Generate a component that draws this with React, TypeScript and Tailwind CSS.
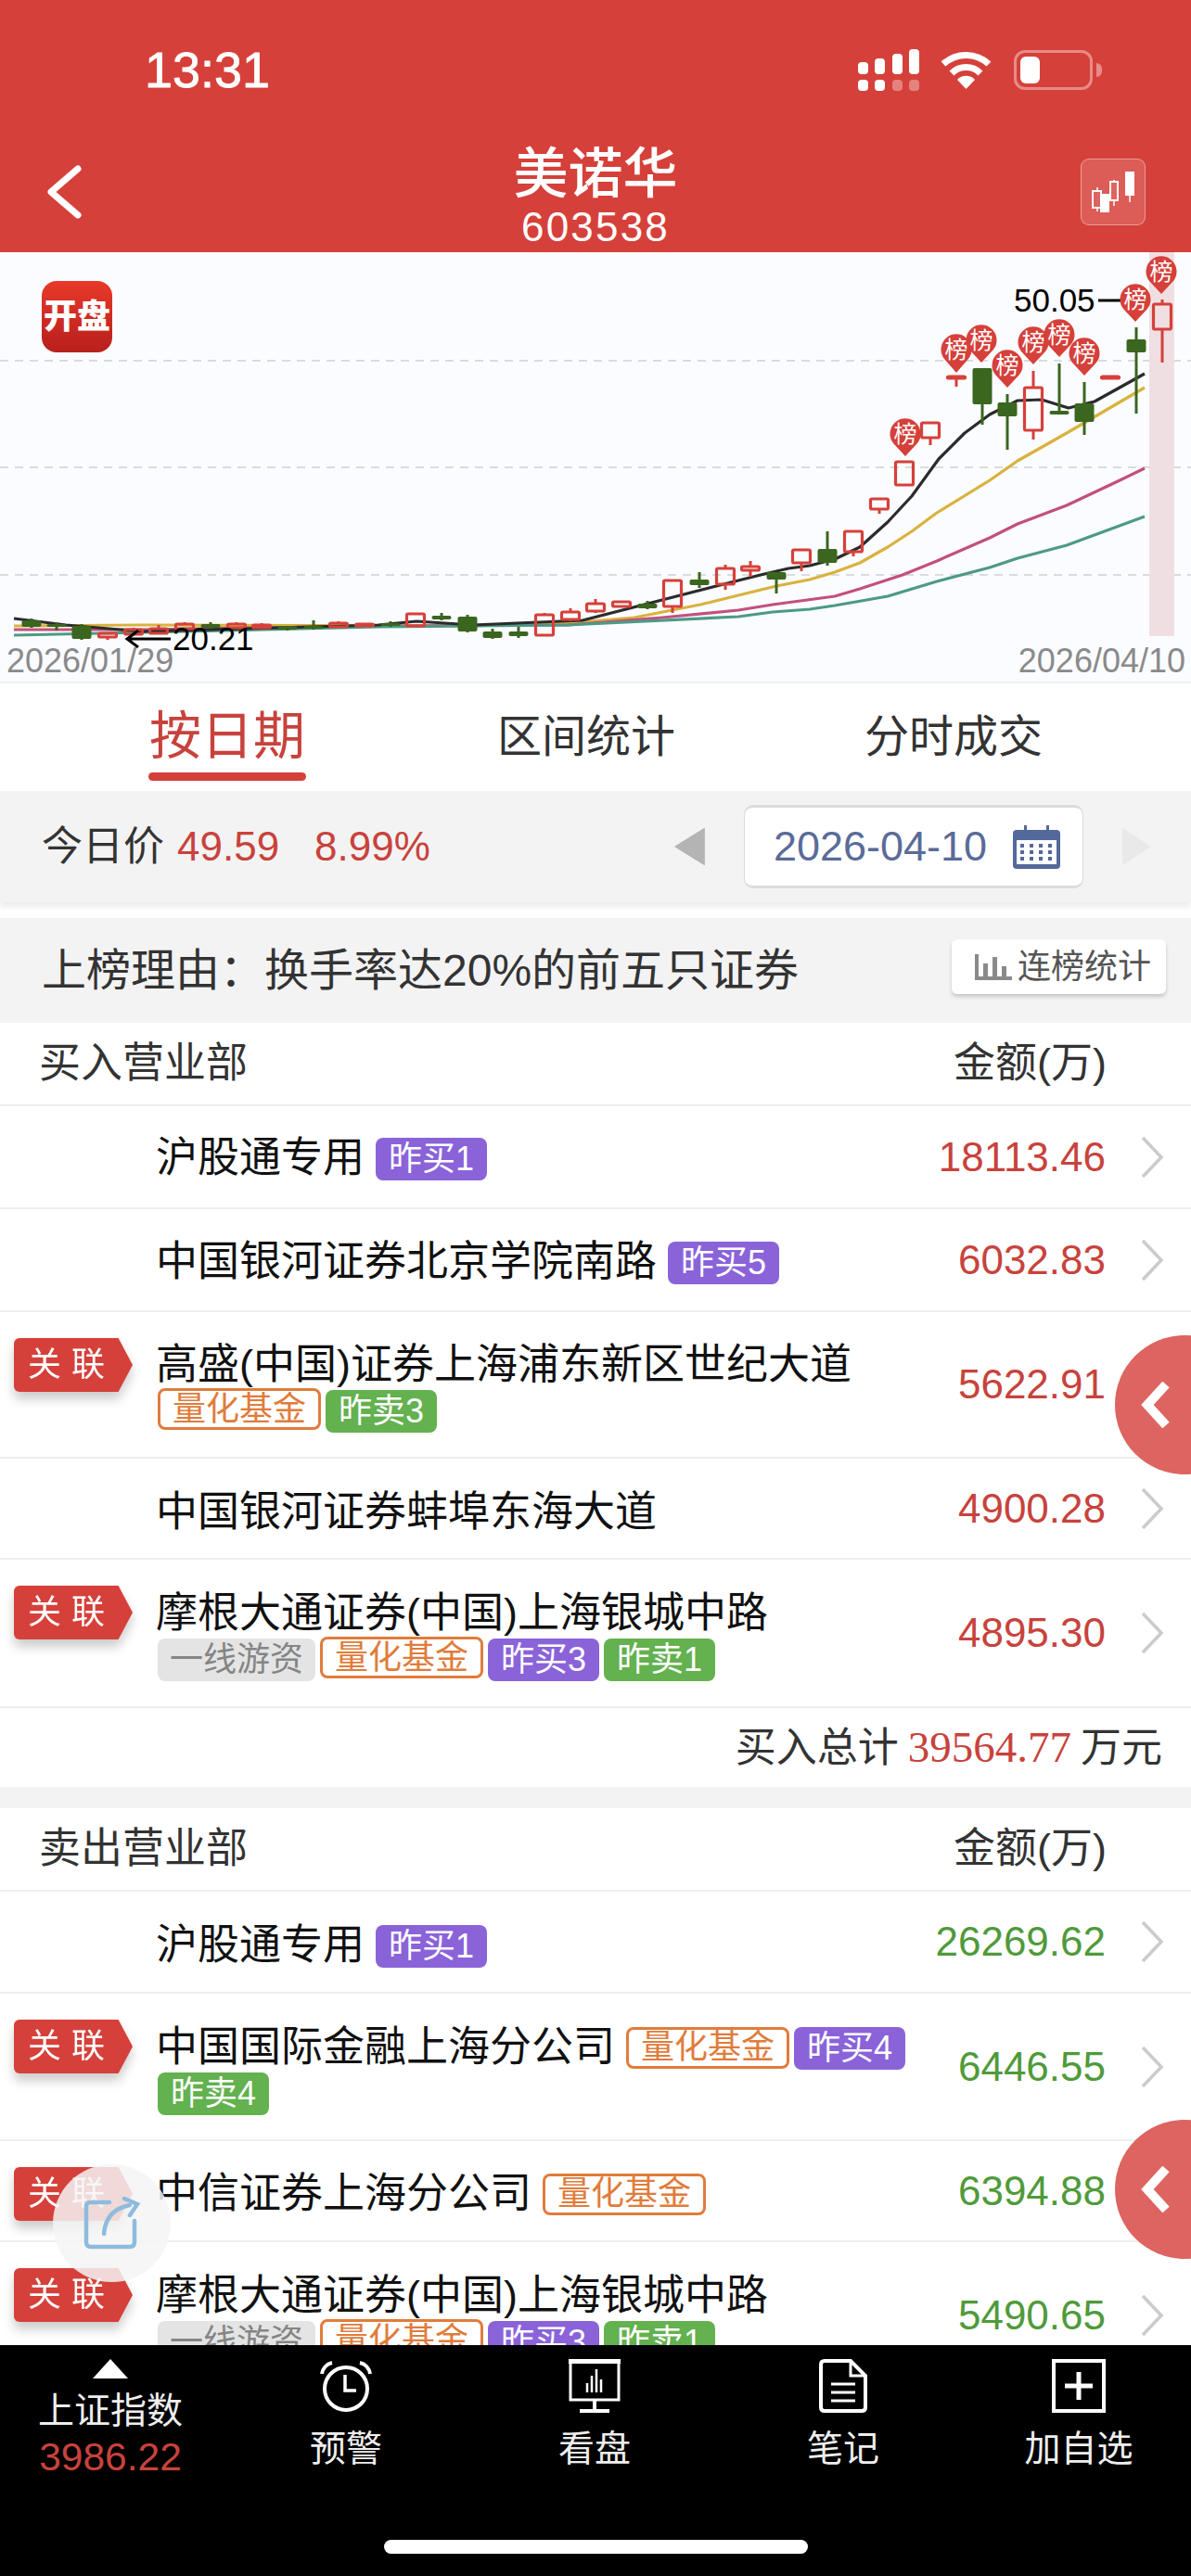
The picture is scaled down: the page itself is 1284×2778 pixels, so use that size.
const RED = '#c8423c';

type TagKind = 'buy' | 'sell' | 'quant' | 'hot';
type Tag = { kind: TagKind; text: string };
type Row = {
  name: string;
  amount: string;
  h: string;
  pt: string;
  linked?: boolean;
  tags?: Tag[];
  below?: Tag[];
};

const TAG_CLASS: Record<TagKind, string> = {
  buy: 'bg-[#8a63d9] text-white px-[14px] mt-[2px] h-[46px]',
  sell: 'bg-[#63b14f] text-white px-[14px] mt-[2px] h-[46px]',
  quant: 'border-[3px] border-[#e07c3c] text-[#e07c3c] bg-white px-[13px] h-[45px]',
  hot: 'bg-[#e4e4e4] text-[#858585] px-[13px] mt-[2px] h-[46px]',
};

const buyRows: Row[] = [
  { name: '沪股通专用', amount: '18113.46', h: 'h-[111px]', pt: 'pt-[31px]', tags: [{ kind: 'buy', text: '昨买1' }] },
  { name: '中国银河证券北京学院南路', amount: '6032.83', h: 'h-[111px]', pt: 'pt-[32px]', tags: [{ kind: 'buy', text: '昨买5' }] },
  {
    name: '高盛(中国)证券上海浦东新区世纪大道', amount: '5622.91', h: 'h-[158px]', pt: 'pt-[32px]', linked: true,
    below: [{ kind: 'quant', text: '量化基金' }, { kind: 'sell', text: '昨卖3' }],
  },
  { name: '中国银河证券蚌埠东海大道', amount: '4900.28', h: 'h-[109px]', pt: 'pt-[33px]' },
  {
    name: '摩根大通证券(中国)上海银城中路', amount: '4895.30', h: 'h-[160px]', pt: 'pt-[33px]', linked: true,
    below: [{ kind: 'hot', text: '一线游资' }, { kind: 'quant', text: '量化基金' }, { kind: 'buy', text: '昨买3' }, { kind: 'sell', text: '昨卖1' }],
  },
];

const sellRows: Row[] = [
  { name: '沪股通专用', amount: '26269.62', h: 'h-[110px]', pt: 'pt-[33px]', tags: [{ kind: 'buy', text: '昨买1' }] },
  {
    name: '中国国际金融上海分公司', amount: '6446.55', h: 'h-[159px]', pt: 'pt-[33px]', linked: true,
    tags: [{ kind: 'quant', text: '量化基金' }, { kind: 'buy', text: '昨买4' }],
    below: [{ kind: 'sell', text: '昨卖4' }],
  },
  { name: '中信证券上海分公司', amount: '6394.88', h: 'h-[109px]', pt: 'pt-[32px]', linked: true, tags: [{ kind: 'quant', text: '量化基金' }] },
  {
    name: '摩根大通证券(中国)上海银城中路', amount: '5490.65', h: 'h-[160px]', pt: 'pt-[33px]', linked: true,
    below: [{ kind: 'hot', text: '一线游资' }, { kind: 'quant', text: '量化基金' }, { kind: 'buy', text: '昨买3' }, { kind: 'sell', text: '昨卖1' }],
  },
];

// x, wick top, body top, body bottom, wick bottom, colour
const candles: [number, number, number, number, number, 'r' | 'g'][] = [
  [34, 667, 669, 676, 677, 'g'], [61, 671, 673, 676, 680, 'g'], [88, 673, 675, 689, 690, 'g'],
  [116, 683, 683, 687, 690, 'r'], [144, 677, 679, 684, 685, 'r'], [171, 674, 678, 683, 684, 'r'],
  [199, 671, 673, 678, 678, 'r'], [227, 671, 673, 677, 678, 'g'], [255, 671, 673, 677, 678, 'r'],
  [282, 672, 674, 677, 678, 'r'], [310, 675, 675, 679, 680, 'g'], [338, 669, 675, 678, 679, 'g'],
  [365, 670, 672, 676, 676, 'r'], [393, 672, 673, 675, 676, 'r'], [421, 670, 672, 675, 676, 'g'],
  [448, 661, 662, 675, 676, 'r'], [476, 661, 664, 668, 669, 'g'], [504, 663, 665, 681, 682, 'g'],
  [531, 678, 681, 688, 689, 'g'], [559, 676, 681, 686, 688, 'g'], [587, 661, 663, 685, 686, 'r'],
  [615, 656, 660, 668, 670, 'r'], [642, 646, 651, 659, 661, 'r'], [670, 648, 649, 654, 655, 'r'],
  [698, 648, 651, 656, 657, 'g'], [725, 625, 626, 654, 661, 'r'], [754, 617, 625, 631, 634, 'g'],
  [782, 609, 613, 630, 636, 'r'], [809, 605, 611, 615, 622, 'r'], [837, 617, 617, 625, 640, 'g'],
  [864, 593, 593, 607, 616, 'r'], [892, 573, 592, 607, 610, 'g'], [920, 573, 573, 595, 600, 'r'],
  [948, 538, 538, 549, 554, 'r'], [975, 498, 498, 523, 523, 'r'], [1003, 456, 456, 472, 480, 'r'],
  [1031, 407, 406, 408, 417, 'r'], [1059, 397, 397, 436, 458, 'g'], [1086, 425, 434, 449, 485, 'g'],
  [1114, 400, 418, 464, 474, 'r'], [1142, 392, 443, 447, 447, 'g'], [1169, 412, 435, 455, 469, 'g'],
  [1197, 407, 406, 408, 408, 'r'], [1225, 353, 366, 380, 446, 'g'], [1253, 323, 328, 355, 391, 'r'],
];

const maLines: [string, string][] = [
  ['#d9b23e', '15,675 153,674 510,675 612,672 684,666 755,652 796,642 837,632 873,625 900,617 927,607 957,590 983,573 1010,553 1067,518 1097,497 1150,467 1234,418'],
  ['#c2507f', '15,679 153,679 408,675 612,674 714,666 796,658 833,652 900,643 927,635 973,620 1010,605 1067,580 1097,565 1150,545 1203,520 1234,505'],
  ['#4c9a85', '15,685 153,682 408,676 612,674 796,665 833,660 873,657 900,653 957,643 1010,627 1067,612 1097,602 1150,588 1234,557'],
  ['#2b2b2b', '15,667 71,674 153,681 408,674 449,670 510,674 628,669 796,626 820,620 850,613 873,610 900,603 927,590 957,563 983,535 1012,495 1040,467 1067,447 1097,432 1123,431 1152,440 1180,433 1234,403'],
];

const pins: [number, number, number][] = [
  [976, 468, 492], [1031, 377, 402], [1058, 367, 391], [1086, 394, 418], [1114, 369, 393],
  [1142, 361, 385], [1169, 381, 405], [1224, 323, 347], [1252, 293, 317],
];

function Chart() {
  return (
    <svg viewBox="0 272 1284 463" className="block w-[1284px] h-[463px]">
      <rect x="0" y="272" width="1284" height="463" fill="#fbfcff" />
      {[389, 504, 620].map((y) => (
        <line key={y} x1="0" x2="1284" y1={y} y2={y} stroke="#cfcfcf" strokeWidth="1.5" strokeDasharray="9 7" />
      ))}
      <rect x="1239" y="272" width="27" height="414" fill="#f0dfe2" />
      {maLines.map(([color, points]) => (
        <polyline key={color} points={points} fill="none" stroke={color} strokeWidth="3.2" strokeLinejoin="round" />
      ))}
      {candles.map(([x, wt, bt, bb, wb, c]) => {
        const color = c === 'r' ? '#d6403a' : '#3a661f';
        return (
          <g key={x}>
            <line x1={x} x2={x} y1={wt} y2={bt} stroke={color} strokeWidth="3" />
            <line x1={x} x2={x} y1={bb} y2={wb} stroke={color} strokeWidth="3" />
            {c === 'r' ? (
              <rect x={x - 9.5} y={bt} width="19" height={bb - bt} rx="1.5" fill="none" stroke={color} strokeWidth="3.2" />
            ) : (
              <rect x={x - 10.5} y={bt} width="21" height={bb - bt} rx="2" fill={color} />
            )}
          </g>
        );
      })}
      <line x1="1184" x2="1210" y1="324" y2="324" stroke="#000" strokeWidth="3" />
      {pins.map(([x, y, tip]) => (
        <g key={x}>
          <path d={`M${x} ${tip} L${x - 13} ${y + 10} A16.5 16.5 0 1 1 ${x + 13} ${y + 10} Z`} fill="#d6403a" />
          <text x={x} y={y + 9} textAnchor="middle" fontSize="25" fill="#fff">榜</text>
        </g>
      ))}
      <text x="1093" y="336" fontSize="35" fill="#000">50.05</text>
      <path d="M184 689 H138 M149 680 L137 689 L149 698" fill="none" stroke="#000" strokeWidth="3" />
      <text x="186" y="701" fontSize="35" fill="#000">20.21</text>
      <text x="7" y="725" fontSize="36" fill="#8a8a8a">2026/01/29</text>
      <text x="1278" y="725" fontSize="36" fill="#8a8a8a" textAnchor="end">2026/04/10</text>
    </svg>
  );
}

function StatusIcons() {
  return (
    <div className="flex items-start">
      <svg width="66" height="45" viewBox="0 0 66 45" className="mt-[53px]">
        {[[0, 14], [18, 10], [37, 5], [55, 0]].map(([x, y]) => (
          <rect key={x} x={x} y={y} width="11" height={27 - y} rx="4" fill="#fff" />
        ))}
        <rect x="0" y="33" width="11" height="12" rx="4" fill="#fff" />
        <rect x="18" y="33" width="11" height="12" rx="4" fill="#fff" />
        <rect x="37" y="33" width="11" height="12" rx="4" fill="#fff" fillOpacity="0.35" />
        <rect x="55" y="33" width="11" height="12" rx="4" fill="#fff" fillOpacity="0.35" />
      </svg>
      <svg width="57" height="41" viewBox="0 0 57 41" className="mt-[55px] ml-[22px]">
        <path d="M4 14 A36 36 0 0 1 53 14" fill="none" stroke="#fff" strokeWidth="7" />
        <path d="M13 24 A22 22 0 0 1 44 24" fill="none" stroke="#fff" strokeWidth="7" />
        <path d="M28.5 41 L19 31 A13 13 0 0 1 38 31 Z" fill="#fff" />
      </svg>
      <div className="mt-[54px] ml-[23px] w-[85px] h-[43px] rounded-[12px] border-[3px] border-white/40 p-[4px]">
        <div className="w-[21px] h-full rounded-[6px] bg-white" />
      </div>
      <div className="mt-[68px] ml-[4px] w-[6px] h-[15px] rounded-r-full bg-white/40" />
    </div>
  );
}

function Chevron() {
  return (
    <svg width="25" height="46" viewBox="0 0 25 46" className="shrink-0">
      <polyline points="2,2 22,23 2,44" fill="none" stroke="#cbcbcb" strokeWidth="3.5" />
    </svg>
  );
}

function TagChip({ tag }: { tag: Tag }) {
  return (
    <span className={`flex items-center rounded-[8px] text-[36px] leading-none whitespace-nowrap ${TAG_CLASS[tag.kind]}`}>
      {tag.text}
    </span>
  );
}

function ListRow({ row, color }: { row: Row; color: string }) {
  return (
    <div className={`flex shrink-0 border-b-2 border-[#eeeeee] ${row.h}`}>
      <div className="w-[168px] shrink-0 pl-[15px] pt-[28px]">
        {row.linked && (
          <div className="[filter:drop-shadow(0_8px_6px_rgba(0,0,0,0.2))]">
            <div className="flex items-center pl-[15px] w-[128px] h-[58px] rounded-l-[6px] bg-[#d6403a] text-white text-[36px] leading-none tracking-[11px] [clip-path:polygon(0_0,88%_0,100%_50%,88%_100%,0_100%)]">
              关联
            </div>
          </div>
        )}
      </div>
      <div className={`flex-1 min-w-0 ${row.pt}`}>
        <div className="flex items-center gap-[5px] h-[50px]">
          <span className="text-[45px] leading-[50px] text-[#111] whitespace-nowrap mr-[7px]">{row.name}</span>
          {row.tags?.map((t) => <TagChip key={t.text} tag={t} />)}
        </div>
        {row.below && (
          <div className="flex items-start gap-[5px] ml-[2px]">
            {row.below.map((t) => <TagChip key={t.text} tag={t} />)}
          </div>
        )}
      </div>
      <div className="flex items-center pr-[29px] shrink-0">
        <span className="text-[44px] leading-none" style={{ color }}>{row.amount}</span>
        <span className="w-[38px]" />
        <Chevron />
      </div>
    </div>
  );
}

function SectionHead({ title }: { title: string }) {
  return (
    <div className="flex items-center justify-between shrink-0 h-[90px] pl-[42px] pr-[91px] border-b-2 border-[#eeeeee] text-[45px] text-[#333]">
      <span>{title}</span>
      <span>金额(万)</span>
    </div>
  );
}

function SideHandle({ cls }: { cls: string }) {
  return (
    <div className={`absolute left-[1202px] w-[150px] h-[150px] rounded-full bg-[#dd6460] flex items-center pl-[27px] ${cls}`}>
      <svg width="34" height="50" viewBox="0 0 34 50">
        <polyline points="28,3 8,25 28,47" fill="none" stroke="#fff" strokeWidth="10" />
      </svg>
    </div>
  );
}

function TabIcon({ name }: { name: string }) {
  if (name === '预警') {
    return (
      <svg width="60" height="58" viewBox="0 0 60 58" fill="none" stroke="#fff">
        <circle cx="30" cy="32" r="23" strokeWidth="4" />
        <polyline points="29,17 29,34 41,34" strokeWidth="3.5" />
        <path d="M4 16 A14 14 0 0 1 15 4 M56 16 A14 14 0 0 0 45 4" strokeWidth="4" />
      </svg>
    );
  }
  if (name === '看盘') {
    return (
      <svg width="56" height="58" viewBox="0 0 56 58" fill="none" stroke="#fff">
        <rect x="2" y="3" width="52" height="41" strokeWidth="3" />
        <rect x="0" y="0" width="56" height="5" fill="#fff" stroke="none" />
        <path d="M20 36 V26 M25 36 V18 M30 36 V11 M35 36 V22" strokeWidth="2.5" />
        <path d="M28 44 V54 M12 56 H44" strokeWidth="4" />
      </svg>
    );
  }
  if (name === '笔记') {
    return (
      <svg width="52" height="58" viewBox="0 0 52 58" fill="none" stroke="#fff" strokeWidth="4">
        <path d="M6 2 H34 L50 18 V52 Q50 56 46 56 H6 Q2 56 2 52 V6 Q2 2 6 2 Z" />
        <path d="M34 2 V18 H50" strokeWidth="3" />
        <path d="M13 27 H39 M13 36 H39 M13 45 H39" strokeWidth="3" />
      </svg>
    );
  }
  return (
    <svg width="58" height="58" viewBox="0 0 58 58" fill="none" stroke="#fff" strokeWidth="4">
      <rect x="2" y="2" width="54" height="54" />
      <path d="M29 14 V44 M14 29 H44" strokeWidth="5" />
    </svg>
  );
}

function TabItem({ name, width }: { name: string; width: string }) {
  return (
    <div className={`flex flex-col items-center shrink-0 ${width}`}>
      <div className="h-[58px] flex items-end">
        <TabIcon name={name} />
      </div>
      <span className="mt-[14px] text-[39px] leading-[50px] text-[#eeeeee]">{name}</span>
    </div>
  );
}

export default function App() {
  return (
    <div className="relative flex flex-col w-[1284px] h-[2778px] overflow-hidden bg-white font-['Liberation_Sans','Noto_Sans_CJK_SC',sans-serif]">
      <header className="relative shrink-0 h-[272px] bg-[#d6403a] text-white">
        <div className="flex justify-between pl-[156px] pr-[96px] h-[150px]">
          <span className="mt-[45px] text-[54px] leading-[60px] [-webkit-text-stroke:0.8px_white]">13:31</span>
          <StatusIcons />
        </div>
        <div className="flex items-start justify-between pl-[47px] pr-[47px]">
          <div className="w-[72px]">
            <svg width="42" height="58" viewBox="0 0 42 58" className="mt-[28px]">
              <polyline points="37,4 8,29 37,54" fill="none" stroke="#fff" strokeWidth="7" strokeLinecap="round" strokeLinejoin="round" />
            </svg>
          </div>
          <div className="flex flex-col items-center">
            <span className="text-[59px] leading-[66px] font-medium mt-[5px]">美诺华</span>
            <span className="text-[44px] leading-[46px] tracking-[2.2px] mt-[1px]">603538</span>
          </div>
          <div className="flex items-center justify-center w-[70px] h-[72px] mt-[21px] mr-[2px] rounded-[9px] border border-white/40 bg-white/15">
            <svg width="50" height="50" viewBox="0 0 50 50" fill="none" stroke="#fff" strokeWidth="2">
              <path d="M8 20 V46 M26 12 V40 M43 4 V36" strokeWidth="1.5" />
              <rect x="3" y="24" width="9" height="18" fill="#dd6460" />
              <rect x="12" y="28" width="8" height="18" fill="#fff" />
              <rect x="22" y="14" width="8" height="20" fill="#dd6460" />
              <rect x="39" y="4" width="8" height="24" fill="#fff" />
            </svg>
          </div>
        </div>
      </header>

      <div className="relative shrink-0">
        <Chart />
        <div className="absolute left-[45px] top-[31px] flex items-center justify-center w-[76px] h-[77px] rounded-[16px] bg-gradient-to-b from-[#e8392a] to-[#b81f1c] text-white text-[36px] leading-none font-black">
          开盘
        </div>
      </div>

      <nav className="flex shrink-0 h-[118px] border-t-2 border-[#f1f1f1] text-[48px] text-[#333]">
        <div className="ml-[160px] w-[170px] flex flex-col items-center">
          <span className="mt-[25px] text-[56px] leading-[64px] text-[#c8423c]">按日期</span>
          <span className="mt-[7px] w-[170px] h-[9px] rounded-full bg-[#d6403a]" />
        </div>
        <span className="ml-[206px] mt-[28px] leading-[60px]">区间统计</span>
        <span className="ml-[204px] mt-[28px] leading-[60px]">分时成交</span>
      </nav>

      <div className="flex items-center shrink-0 h-[120px] pl-[45px] bg-[#f3f3f3] shadow-[0_5px_6px_rgba(0,0,0,0.08)] text-[44px]">
        <span className="text-[#333]">今日价</span>
        <span className="ml-[14px]" style={{ color: RED }}>49.59</span>
        <span className="ml-[38px]" style={{ color: RED }}>8.99%</span>
        <span className="ml-[263px] w-[33px] h-[41px] bg-[#b4b4b4] [clip-path:polygon(100%_0,100%_100%,0_50%)]" />
        <div className="flex items-center ml-[42px] w-[366px] h-[90px] pl-[31px] rounded-[10px] bg-white border-y-[3px] border-x border-[#dcdcdc] text-[45px] text-[#5a6b99]">
          <span>2026-04-10</span>
          <svg width="51" height="47" viewBox="0 0 51 47" className="ml-[28px]">
            <rect x="0" y="5" width="51" height="42" rx="4" fill="#54689c" />
            <rect x="4" y="16" width="43" height="26" fill="#fff" />
            <rect x="12" y="0" width="3" height="13" fill="#54689c" />
            <rect x="36" y="0" width="3" height="13" fill="#54689c" />
            {[10, 20, 30, 40].map((x) =>
              [20, 27, 34].map((y) => <rect key={`${x}-${y}`} x={x - 2} y={y} width="4" height="4" fill="#54689c" />),
            )}
          </svg>
        </div>
        <span className="ml-[42px] w-[31px] h-[41px] bg-[#e9e9e9] [clip-path:polygon(0_0,0_100%,100%_50%)]" />
      </div>

      <div className="flex items-center justify-between shrink-0 h-[113px] mt-[17px] pl-[45px] pr-[27px] bg-[#f3f3f3] text-[48px] text-[#333]">
        <span className="whitespace-nowrap">上榜理由：换手率达20%的前五只证券</span>
        <div className="flex items-center w-[231px] h-[59px] pl-[25px] mb-[8px] rounded-[6px] bg-white shadow-[0_3px_4px_rgba(0,0,0,0.18)] text-[36px] text-[#555]">
          <svg width="40" height="28" viewBox="0 0 40 28" fill="#8a8a8a" className="shrink-0">
            <rect x="0" y="0" width="4" height="28" />
            <rect x="0" y="24" width="40" height="4" />
            <rect x="9" y="10" width="5" height="14" />
            <rect x="19" y="3" width="5" height="21" />
            <rect x="29" y="13" width="5" height="11" />
          </svg>
          <span className="ml-[6px] whitespace-nowrap">连榜统计</span>
        </div>
      </div>

      <main className="flex flex-col flex-1 min-h-0 overflow-hidden">
        <SectionHead title="买入营业部" />
        {buyRows.map((r) => <ListRow key={r.name + r.amount} row={r} color="#c8423c" />)}
        <div className="flex items-center justify-end shrink-0 h-[85px] pr-[31px] text-[44px] text-[#333]">
          <span>买入总计</span>
          <span className="mx-[10px] text-[47px] text-[#c8423c] font-['Liberation_Serif',serif]">39564.77</span>
          <span>万元</span>
        </div>
        <div className="shrink-0 h-[23px] bg-[#f3f3f3]" />
        <SectionHead title="卖出营业部" />
        {sellRows.map((r) => <ListRow key={r.name + r.amount} row={r} color="#4f9a3a" />)}
      </main>

      <footer className="shrink-0 h-[249px] bg-black flex flex-col">
        <div className="flex pt-[15px]">
          <div className="flex flex-col items-center shrink-0 w-[238px]">
            <span className="w-[38px] h-[21px] bg-white [clip-path:polygon(50%_0,100%_100%,0_100%)]" />
            <span className="mt-[10px] text-[39px] leading-[50px] text-[#eeeeee]">上证指数</span>
            <span className="text-[42.5px] leading-[50px] text-[#c8423c]">3986.22</span>
          </div>
          <TabItem name="预警" width="w-[270px]" />
          <TabItem name="看盘" width="w-[266px]" />
          <TabItem name="笔记" width="w-[270px]" />
          <TabItem name="加自选" width="w-[238px]" />
        </div>
        <div className="mt-auto mb-[24px] mx-auto w-[457px] h-[15px] rounded-full bg-white" />
      </footer>

      <SideHandle cls="top-[1440px]" />
      <SideHandle cls="top-[2286px]" />

      <div className="absolute left-[57px] top-[2334px] flex items-center justify-center w-[127px] h-[127px] rounded-full bg-[#f5f5f5]/85">
        <svg width="62" height="58" viewBox="0 0 62 58" fill="none" stroke="#8ebbdd" strokeWidth="4.5" strokeLinecap="round">
          <path d="M28 6 H8 Q3 6 3 11 V49 Q3 54 8 54 H50 Q55 54 55 49 V26" />
          <path d="M22 40 Q24 14 50 9" />
          <path d="M44 2 L58 8 L50 20" />
        </svg>
      </div>
    </div>
  );
}
